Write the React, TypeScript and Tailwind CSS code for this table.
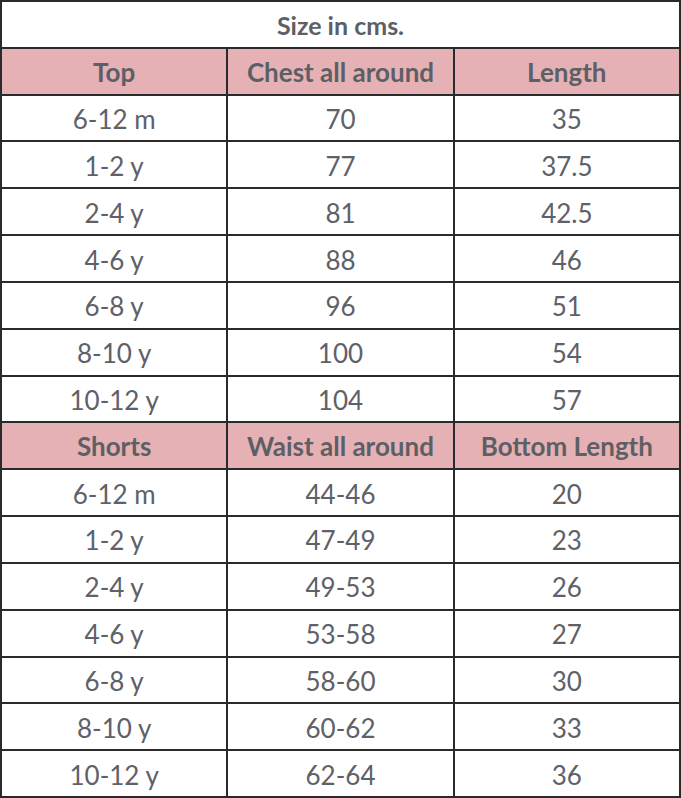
const top = [
  ['6-12 m', '70', '35'],
  ['1-2 y', '77', '37.5'],
  ['2-4 y', '81', '42.5'],
  ['4-6 y', '88', '46'],
  ['6-8 y', '96', '51'],
  ['8-10 y', '100', '54'],
  ['10-12 y', '104', '57'],
]

const shorts = [
  ['6-12 m', '44-46', '20'],
  ['1-2 y', '47-49', '23'],
  ['2-4 y', '49-53', '26'],
  ['4-6 y', '53-58', '27'],
  ['6-8 y', '58-60', '30'],
  ['8-10 y', '60-62', '33'],
  ['10-12 y', '62-64', '36'],
]

function HeaderRow({ cells }: { cells: string[] }) {
  return (
    <>
      {cells.map((c) => (
        <div
          key={c}
          className="flex items-center justify-center border-r-2 border-b-2 border-[#2a2a2a] bg-[#e6b1b4] pt-[2px] text-[26px] font-bold text-[#5c5f66]"
        >
          {c}
        </div>
      ))}
    </>
  )
}

function DataRows({ rows }: { rows: string[][] }) {
  return (
    <>
      {rows.map((r) =>
        r.map((c, i) => (
          <div
            key={r[0] + i}
            className="flex items-center justify-center border-r-2 border-b-2 border-[#2a2a2a] bg-white pt-[3px] text-[26px] text-[#5e6168]"
          >
            {c}
          </div>
        ))
      )}
    </>
  )
}

export default function App() {
  return (
    <div className="w-[681px] h-[798px] bg-white" style={{ fontFamily: 'Lato, "Open Sans", sans-serif' }}>
      <div className="grid h-[798px] w-[681px] grid-cols-3 grid-rows-[repeat(17,1fr)] border-l-2 border-t-2 border-[#2a2a2a]">
        {/* Title */}
        <div className="col-span-3 flex items-center justify-center border-r-2 border-b-2 border-[#2a2a2a] pt-[3px] text-[25px] font-bold text-[#5c5f66]">
          Size in cms.
        </div>

        <HeaderRow cells={['Top', 'Chest all around', 'Length']} />
        <DataRows rows={top} />

        <HeaderRow cells={['Shorts', 'Waist all around', 'Bottom Length']} />
        <DataRows rows={shorts} />
      </div>
    </div>
  )
}
